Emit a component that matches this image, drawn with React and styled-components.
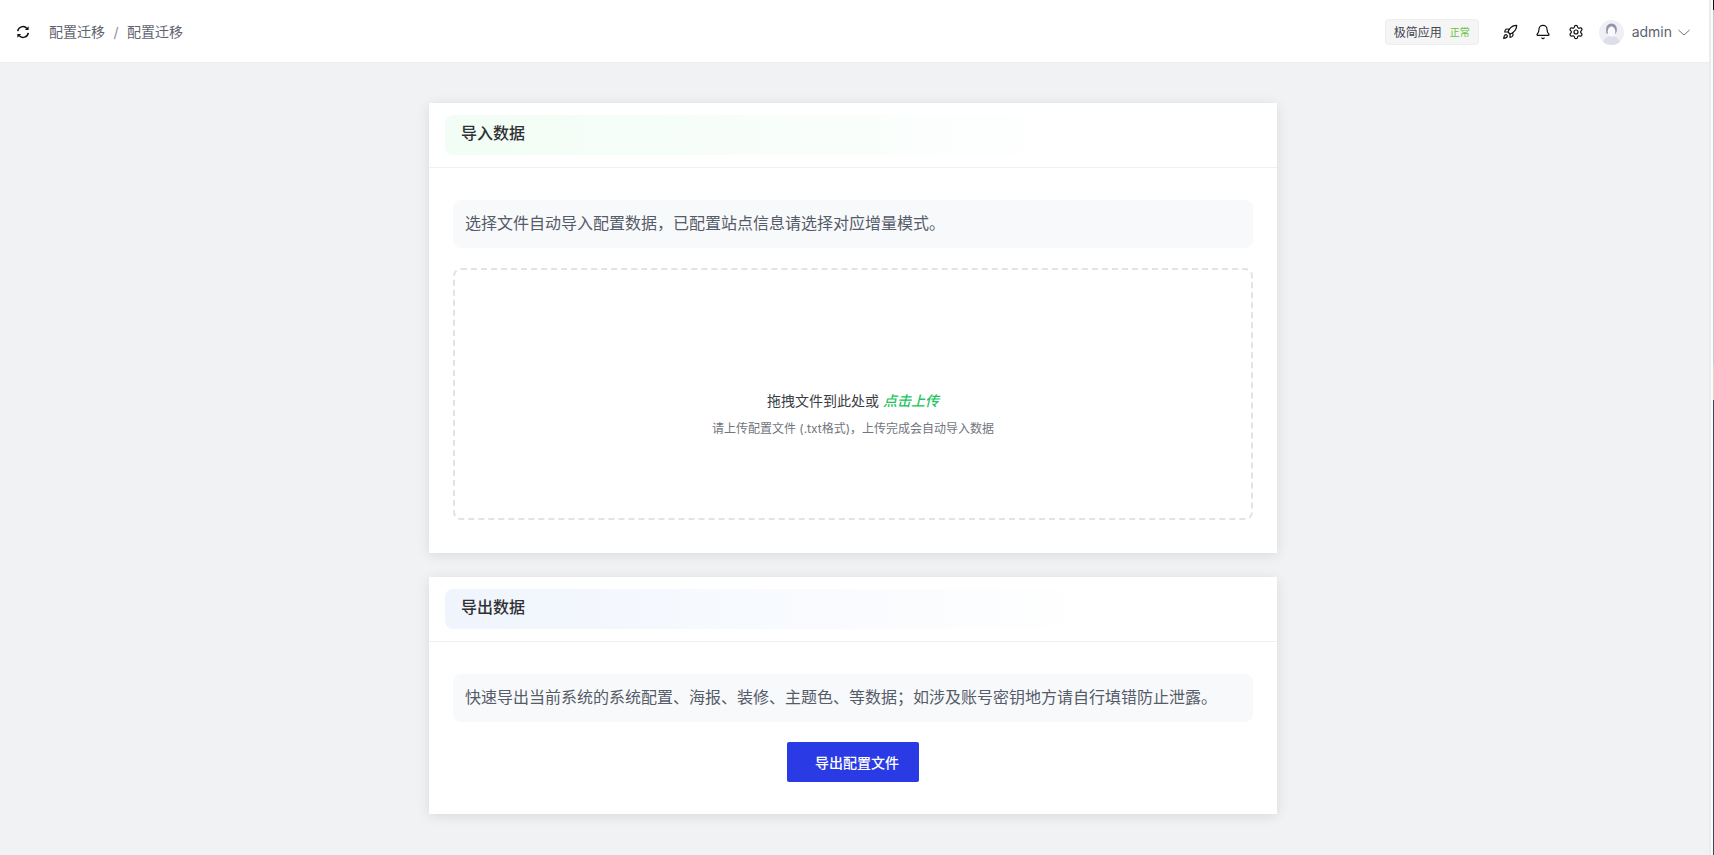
import styled, { createGlobalStyle } from 'styled-components';
import { Bell, Rocket, Settings } from 'lucide-react';

const GlobalStyle = createGlobalStyle`
  html, body {
    margin: 0;
    height: 100%;
    overflow: hidden;
    background: #fff;
  }
  #root {
    height: 100%;
  }
  * {
    box-sizing: border-box;
  }
`;

const RefreshIcon = () => (
  <svg width="14" height="14" viewBox="0 0 14 14" fill="none">
    <path d="M1.700 6.200A5.400 5.400 0 0 1 11 3.400" stroke="#111" strokeWidth="1.500" />
    <path d="M12.300 7.800A5.400 5.400 0 0 1 3 10.600" stroke="#111" strokeWidth="1.500" />
    <path d="M12.600 1.200v3.700H8.900z" fill="#111" />
    <path d="M1.400 12.800V9.100h3.700z" fill="#111" />
  </svg>
);

const Avatar = () => (
  <svg width="25" height="25" viewBox="0 0 25 25">
    <circle cx="12.500" cy="12.500" r="12.500" fill="#eef0f6" />
    <path d="M7.200 11c-.6-4.600 1.800-7.500 5.300-7.500s5.900 2.900 5.300 7.500l-1 2.500-9.600 0z" fill="#9497aa" />
    <ellipse cx="12.500" cy="11.500" rx="3.800" ry="5" fill="#fafafd" />
    <path d="M4 22c1-3.500 4-5 6-5.500h5c2 .5 5 2 6 5.500-2.200 2-5.300 3-8.500 3S6.200 24 4 22z" fill="#dcdeea" />
  </svg>
);

const Chevron = () => (
  <svg width="12" height="7" viewBox="0 0 12 7" fill="none">
    <path d="M.5 1l5.500 5 5.500-5" stroke="#6b7280" strokeWidth="1" />
  </svg>
);

const App = () => (
  <Shell>
    <GlobalStyle />
    <Main>
      <TopBar>
        <Crumbs>
          <RefreshIcon />
          <CrumbText>配置迁移</CrumbText>
          <CrumbSlash>/</CrumbSlash>
          <CrumbText>配置迁移</CrumbText>
        </Crumbs>
        <Tools>
          <StatusTag>
            极简应用
            <StatusText>正常</StatusText>
          </StatusTag>
          <IconGroup>
            <Rocket size={16} strokeWidth={1.8} color="#111" />
            <Bell size={16} strokeWidth={1.8} color="#111" />
            <Settings size={16} strokeWidth={1.8} color="#111" />
          </IconGroup>
          <User>
            <Avatar />
            <UserName>admin</UserName>
            <Chevron />
          </User>
        </Tools>
      </TopBar>
      <Content>
        <Card>
          <CardHead>
            <CardTitle $tint="#f1fdf5">导入数据</CardTitle>
          </CardHead>
          <CardBody>
            <Notice>选择文件自动导入配置数据，已配置站点信息请选择对应增量模式。</Notice>
            <DropZone>
              <DropText>
                拖拽文件到此处或 <DropLink>点击上传</DropLink>
              </DropText>
              <DropHint>请上传配置文件 (.txt格式)，上传完成会自动导入数据</DropHint>
            </DropZone>
          </CardBody>
        </Card>
        <Card>
          <CardHead>
            <CardTitle $tint="#f0f5fd">导出数据</CardTitle>
          </CardHead>
          <CardBody>
            <Notice>快速导出当前系统的系统配置、海报、装修、主题色、等数据；如涉及账号密钥地方请自行填错防止泄露。</Notice>
            <ButtonRow>
              <ExportButton type="button">导出配置文件</ExportButton>
            </ButtonRow>
          </CardBody>
        </Card>
      </Content>
    </Main>
    <EdgeStrip />
  </Shell>
);

export default App;

const Shell = styled.div`
  display: flex;
  height: 855px;
  font-family: Inter, "Noto Sans CJK SC", sans-serif;
  background: #fff;
`;

const Main = styled.div`
  flex: 1;
  min-width: 0;
  display: flex;
  flex-direction: column;
  background: #f0f2f4;
  border-top-right-radius: 10px;
  overflow: hidden;
`;

const EdgeStrip = styled.div`
  width: 5px;
  background:
    linear-gradient(
        to bottom,
        #111 0 10px,
        #c3ccd6 10px 365px,
        #e3d2ce 365px 400px,
        #3d4a55 400px
      )
      right top / 1px 100% no-repeat,
    linear-gradient(to right, #ebecee 0 2px, #fafafa 2px 4px) left top / 4px 100% no-repeat;
`;

const TopBar = styled.header`
  flex: none;
  height: 63px;
  display: flex;
  align-items: center;
  justify-content: space-between;
  padding: 2px 19px 0 16px;
  background: #fff;
  border-bottom: 1px solid #ebeef3;
`;

const Crumbs = styled.nav`
  display: flex;
  align-items: center;
  font-size: 14px;
  color: #5f6470;

  svg {
    margin-right: 19px;
  }
`;

const CrumbText = styled.span`
  line-height: 20px;
`;

const CrumbSlash = styled.span`
  width: 22px;
  text-align: center;
  color: #8a8f99;
`;

const Tools = styled.div`
  display: flex;
  align-items: center;
`;

const StatusTag = styled.div`
  height: 26px;
  width: 94px;
  padding-bottom: 2px;
  display: flex;
  align-items: center;
  justify-content: center;
  gap: 8px;
  font-size: 12px;
  color: #414652;
  background: #f5f5f5;
  border: 1px solid #ececec;
  border-radius: 4px;
`;

const StatusText = styled.span`
  font-size: 10px;
  color: #67c23a;
`;

const IconGroup = styled.div`
  display: flex;
  align-items: center;
  gap: 17px;
  margin: 0 15px 0 23px;
`;

const User = styled.div`
  display: flex;
  align-items: center;
`;

const UserName = styled.span`
  margin: 0 6px 2px 8px;
  font-size: 14px;
  color: #5b6270;
`;

const Content = styled.main`
  flex: 1;
  display: flex;
  flex-direction: column;
  align-items: center;
  gap: 24px;
  padding: 40px 3px 0 0;
`;

const Card = styled.section`
  width: 848px;
  background: #fff;
  box-shadow: 0 2px 12px rgba(0, 0, 0, 0.1);
`;

const CardHead = styled.div`
  padding: 12px 16px;
  height: 65px;
  border-bottom: 1px solid #f0f0f2;
`;

const CardTitle = styled.h2`
  margin: 0;
  height: 40px;
  padding-left: 16px;
  font-size: 16px;
  font-weight: 500;
  line-height: 36px;
  color: #303133;
  border-radius: 8px;
  background: linear-gradient(to right, ${(p) => p.$tint}, #ffffff 80%);
`;

const CardBody = styled.div`
  padding: 32px 24px;
`;

const Notice = styled.p`
  margin: 0;
  height: 48px;
  padding: 0 12px;
  font-size: 16px;
  line-height: 46px;
  color: #555b69;
  background: #f8f9fb;
  border-radius: 8px;
`;

const DropZone = styled.div`
  height: 252px;
  margin: 20px 0 1px;
  padding-top: 40px;
  display: flex;
  flex-direction: column;
  align-items: center;
  justify-content: center;
  border: 2px dashed #e2e3e8;
  border-radius: 8px;
`;

const DropText = styled.div`
  font-size: 14px;
  line-height: 20px;
  color: #3a3d44;
`;

const DropLink = styled.em`
  font-weight: 500;
  color: #22c55e;
`;

const DropHint = styled.div`
  margin-top: 9px;
  font-size: 12px;
  line-height: 18px;
  color: #71757d;
`;

const ButtonRow = styled.div`
  display: flex;
  justify-content: center;
  margin-top: 20px;
`;

const ExportButton = styled.button`
  width: 132px;
  height: 40px;
  padding: 0 20px 0 28px;
  font-family: inherit;
  font-size: 14px;
  font-weight: 500;
  color: #fff;
  background: #2a3be6;
  border: none;
  border-radius: 2px;
`;
